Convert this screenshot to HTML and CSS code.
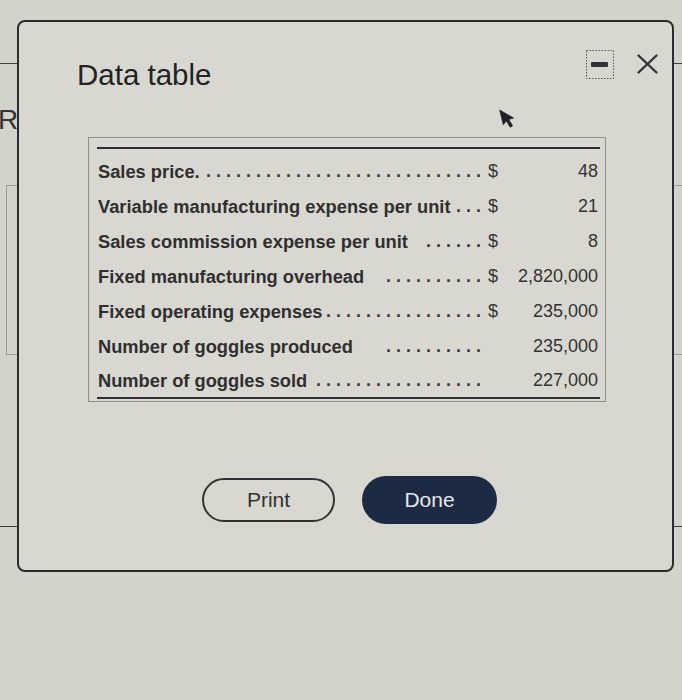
FILE: index.html
```html
<!DOCTYPE html>
<html lang="en">
<head>
<meta charset="utf-8">
<title>Data table</title>
<link rel="stylesheet" href="styles.css">
</head>
<body>
<div class="page">
  <div class="page-header"></div>
  <h2 class="page-title">Requirements</h2>
  <div class="page-box"></div>
  <div class="page-rule"></div>
</div>

<div class="modal">
  <div class="modal-header">
    <h1 class="modal-title">Data table</h1>
    <div class="modal-icons">
      <svg class="icon-min" width="28" height="29" viewBox="0 0 28 29">
        <rect x="0.5" y="0.5" width="27" height="28" fill="none" stroke="#555" stroke-width="1" stroke-dasharray="1.5 1.5"/>
        <rect x="5" y="12" width="17" height="5" rx="1" fill="#333"/>
      </svg>
      <svg class="icon-close" width="21" height="20" viewBox="0 0 21 20">
        <path d="M1.5 1.5 L19.5 18.5 M19.5 1.5 L1.5 18.5" stroke="#333" stroke-width="2.4" stroke-linecap="round"/>
      </svg>
    </div>
  </div>

  <div class="table-box">
    <div class="table-rule"></div>
    <div class="data-table">
      <div class="row">
        <div class="label"><span>Sales price.</span><span class="dots">............................</span></div>
        <div class="cur">$</div>
        <div class="val">48</div>
      </div>
      <div class="row">
        <div class="label"><span>Variable manufacturing expense per unit</span><span class="dots">...</span></div>
        <div class="cur">$</div>
        <div class="val">21</div>
      </div>
      <div class="row">
        <div class="label"><span>Sales commission expense per unit</span><span class="dots">......</span></div>
        <div class="cur">$</div>
        <div class="val">8</div>
      </div>
      <div class="row">
        <div class="label"><span>Fixed manufacturing overhead</span><span class="dots">..........</span></div>
        <div class="cur">$</div>
        <div class="val">2,820,000</div>
      </div>
      <div class="row">
        <div class="label"><span>Fixed operating expenses</span><span class="dots">................</span></div>
        <div class="cur">$</div>
        <div class="val">235,000</div>
      </div>
      <div class="row">
        <div class="label"><span>Number of goggles produced</span><span class="dots">..........</span></div>
        <div class="cur"></div>
        <div class="val">235,000</div>
      </div>
      <div class="row last">
        <div class="label"><span>Number of goggles sold</span><span class="dots">.................</span></div>
        <div class="cur"></div>
        <div class="val">227,000</div>
      </div>
    </div>
  </div>

  <div class="modal-actions">
    <button class="btn btn-print" type="button">Print</button>
    <button class="btn btn-done" type="button">Done</button>
  </div>

  <svg class="cursor" width="16" height="21" viewBox="0 0 16 21">
    <path d="M1 1 L2.5 16 L6 12.5 L9 19.5 L11.5 18.3 L8.6 11.5 L13.5 10.8 Z" fill="#1f1f22" stroke="#2a2a2e" stroke-width="0.8" stroke-linejoin="round"/>
  </svg>
</div>
</body>
</html>
```

FILE: styles.css
```css
* {
  box-sizing: border-box;
}

html, body {
  margin: 0;
  padding: 0;
}

body {
  width: 682px;
  height: 700px;
  overflow: hidden;
  background: #d4d3cb;
  font-family: "Liberation Sans", Arial, sans-serif;
  color: #2e2e2e;
  position: relative;
}

/* underlying page */
.page {
  display: flex;
  flex-direction: column;
}

.page-header {
  height: 64px;
  border-bottom: 1px solid #3d3d3d;
}

.page-title {
  margin: 42px 0 0 -2px;
  font-size: 28px;
  line-height: 28px;
  font-weight: normal;
  color: #333;
  white-space: nowrap;
}

.page-box {
  margin: 51px -4px 0 6px;
  height: 170px;
  border: 1px solid #9c9b94;
}

.page-rule {
  margin-top: 171px;
  border-top: 1px solid #3d3d3d;
}

/* modal dialog */
.modal {
  position: absolute;
  left: 17px;
  top: 20px;
  width: 657px;
  height: 552px;
  background: #d9d8d0;
  border: 2px solid #2c2c2c;
  border-radius: 8px;
  display: flex;
  flex-direction: column;
}

.modal-header {
  display: flex;
  justify-content: space-between;
  align-items: flex-start;
  padding: 28px 14px 0 58px;
}

.modal-title {
  margin: 10px 0 0 0;
  font-size: 29.5px;
  line-height: 29px;
  font-weight: normal;
  color: #232323;
}

.modal-icons {
  display: flex;
  align-items: flex-start;
  gap: 23px;
}

.icon-close {
  margin-top: 4px;
}

.table-box {
  margin: 48px 0 0 69px;
  width: 518px;
  height: 265px;
  border: 1px solid #8f8e88;
  padding: 9px 5px 2px 8px;
}

.table-rule {
  height: 2px;
  background: #2f2f2f;
  margin-bottom: 5px;
}

.data-table {
  display: flex;
  flex-direction: column;
}

.row {
  display: grid;
  grid-template-columns: 389px 16px 1fr;
  align-items: center;
  height: 35px;
  font-size: 18px;
}

.row.last {
  border-bottom: 2px solid #2f2f2f;
}

.label {
  display: flex;
  align-items: center;
  padding-left: 1px;
  font-size: 18.3px;
  font-weight: bold;
  color: #2f2f2f;
  white-space: nowrap;
}

.dots {
  margin-left: auto;
  letter-spacing: 5px;
  font-size: 18px;
  font-weight: bold;
  color: #3a3a3a;
  white-space: nowrap;
}

.cur {
  padding-left: 2px;
  color: #333;
}

.val {
  text-align: right;
  padding-right: 2px;
  color: #333;
}

.modal-actions {
  display: flex;
  justify-content: center;
  align-items: center;
  gap: 27px;
  margin-top: 74px;
  padding-left: 8px;
  height: 48px;
}

.btn {
  font-family: "Liberation Sans", Arial, sans-serif;
  font-size: 21px;
  padding: 0;
  cursor: pointer;
}

.btn-print {
  width: 133px;
  height: 44px;
  border: 2px solid #333;
  border-radius: 22px;
  background: transparent;
  color: #333;
}

.btn-done {
  width: 135px;
  height: 48px;
  border: none;
  border-radius: 24px;
  background: #1d2a44;
  color: #e6e6e6;
}

.cursor {
  position: absolute;
  left: 481px;
  top: 86px;
  transform: rotate(-8deg);
}
```
